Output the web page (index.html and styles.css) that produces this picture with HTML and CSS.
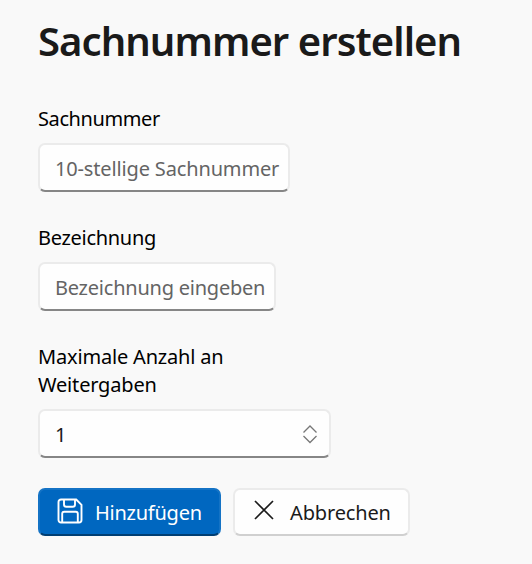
FILE: index.html
```html
<!DOCTYPE html>
<html lang="de">
<head>
<meta charset="utf-8">
<title>Sachnummer erstellen</title>
<link rel="stylesheet" href="styles.css">
</head>
<body>
<main class="page">
  <h1 class="title">Sachnummer erstellen</h1>
  <form class="form">
    <div class="field">
      <label class="label label-number" for="number">Sachnummer</label>
      <input class="input input-number" id="number" type="text" placeholder="10-stellige Sachnummer">
    </div>
    <div class="field">
      <label class="label" for="name">Bezeichnung</label>
      <input class="input input-name" id="name" type="text" placeholder="Bezeichnung eingeben">
    </div>
    <div class="field">
      <label class="label label-max" for="max">Maximale Anzahl an<br>Weitergaben</label>
      <div class="input spinner">
        <input class="spinner-value" id="max" type="text" value="1">
        <svg class="spinner-arrows" viewBox="0 0 16 20" fill="none"><path d="M1.500 8.500 8 2l6.500 6.500M1.500 12 8 18.500 14.500 12"/></svg>
      </div>
    </div>
    <div class="actions">
      <button class="button primary" type="button">
        <svg class="icon-save" viewBox="0 0 26 26" fill="none"><path d="M4 1.500h15.200l5.300 5.300V22a2.500 2.500 0 0 1-2.500 2.500H4A2.500 2.500 0 0 1 1.500 22V4A2.500 2.500 0 0 1 4 1.500Z"/><path d="M7 1.500v5A2.300 2.300 0 0 0 9.300 8.800h6.400A2.300 2.300 0 0 0 18 6.500v-5M5.200 24.500V15.800a2 2 0 0 1 2-2h11.600a2 2 0 0 1 2 2v8.700"/></svg>
        <span>Hinzufügen</span>
      </button>
      <button class="button secondary" type="button">
        <svg class="icon-close" viewBox="0 0 20 20" fill="none"><path d="m1 1 18 18M19 1 1 19"/></svg>
        <span>Abbrechen</span>
      </button>
    </div>
  </form>
</main>
</body>
</html>
```
FILE: styles.css
```css
* {
  box-sizing: border-box;
}

body {
  margin: 0;
  background: #f9f9f9;
  color: #000;
  font: 20px/28px "Noto Sans", "Open Sans", sans-serif;
}

.page {
  padding: 13px 38px 0;
}

.title {
  margin: 0;
  color: #1a1a1a;
  font-size: 40px;
  font-weight: 600;
  line-height: 56px;
  letter-spacing: -0.93px;
  white-space: nowrap;
}

.form {
  display: flex;
  flex-direction: column;
  gap: 30px;
  margin-top: 36px;
}

.field {
  display: flex;
  flex-direction: column;
  align-items: flex-start;
  gap: 10px;
}

.field + .field {
  margin-top: 2px;
}

.label {
  letter-spacing: -0.3px;
  white-space: nowrap;
}

.label-number {
  letter-spacing: -0.4px;
}

.label-max {
  letter-spacing: -0.18px;
}

.input {
  height: 49px;
  padding: 1px 8px 0 15px;
  border: 2px solid #ebebeb;
  border-bottom-color: #868686;
  border-radius: 7px;
  background: #fefefe;
  color: #1a1a1a;
  font: inherit;
  letter-spacing: -0.23px;
  outline: none;
}

.input::placeholder {
  color: #646464;
  opacity: 1;
}

.input-number {
  width: 252px;
  letter-spacing: -0.15px;
}

.input-name {
  width: 238px;
}

.spinner {
  display: flex;
  align-items: center;
  justify-content: space-between;
  width: 293px;
  padding-right: 11px;
}

.spinner-value {
  width: 200px;
  padding: 1px 0 0;
  border: 0;
  background: transparent;
  color: inherit;
  font: inherit;
  outline: none;
}

.spinner-arrows {
  width: 16px;
  height: 20px;
  stroke: #777;
  stroke-width: 1.3;
}

.actions {
  display: flex;
  gap: 12px;
}

.button {
  display: flex;
  align-items: center;
  height: 48px;
  padding: 2px 0 0;
  border: 2px solid #ebebeb;
  border-radius: 7px;
  font: inherit;
  letter-spacing: -0.25px;
  white-space: nowrap;
}

.primary {
  width: 183px;
  padding-left: 17px;
  gap: 12px;
  border-color: #1473c5 #1473c5 #003e73;
  background: #0067c0;
  color: #fff;
}

.secondary {
  width: 177px;
  padding-left: 19px;
  gap: 16px;
  border-bottom-color: #d0d0d0;
  background: #fefefe;
  color: #1a1a1a;
  letter-spacing: -0.15px;
}

.icon-save {
  flex: none;
  width: 26px;
  height: 26px;
  margin-top: -5px;
  stroke: #fff;
  stroke-width: 1.9;
}

.icon-close {
  flex: none;
  width: 20px;
  height: 20px;
  margin-top: -6px;
  stroke: #1a1a1a;
  stroke-width: 1.7;
}
```
